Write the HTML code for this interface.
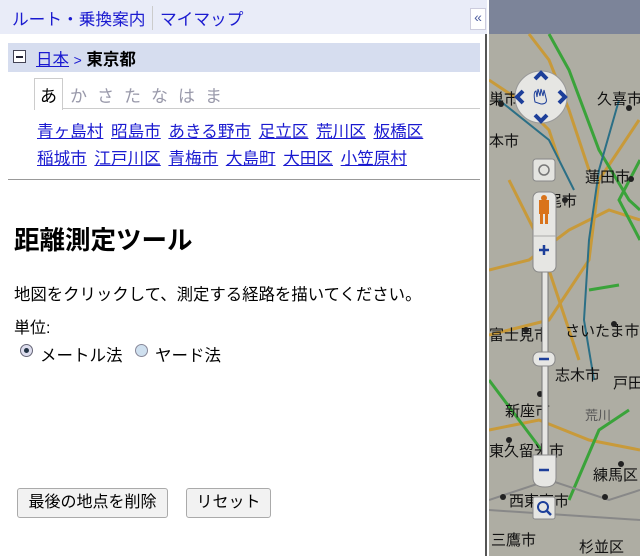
<!DOCTYPE html>
<html><head><meta charset="utf-8"><style>
*{margin:0;padding:0;box-sizing:border-box}
body{width:640px;height:556px;overflow:hidden;position:relative;background:#fff;font-family:"Liberation Sans","Noto Sans CJK JP",sans-serif;color:#000}
.a{position:absolute;white-space:nowrap}
a{color:#1a1ad0;text-decoration:underline}
#left{position:absolute;left:0;top:0;width:487px;height:556px;background:#fff;border-right:2px solid #555}
#top{position:absolute;left:0;top:0;width:487px;height:34px;background:#e9ecf8}
#map{position:absolute;left:489px;top:0;width:151px;height:556px;background:#aeada3;overflow:hidden}
</style></head><body>
<div id="map">
<svg width="151" height="556" style="position:absolute;left:0;top:0">
<rect width="151" height="34" fill="#7c8499"/>
<g fill="none" stroke-width="3">
<path d="M40 34 L60 60 L80 110 L100 170" stroke="#c89a3a"/>
<path d="M0 80 L30 100 L60 130 L70 160" stroke="#c89a3a"/>
<path d="M150 120 L110 180 L100 260 L60 320 L20 330 L0 335" stroke="#c89a3a"/>
<path d="M0 270 L40 260 L80 230 L120 210 L151 220" stroke="#c89a3a"/>
<path d="M20 180 L50 240 L70 300 L90 360" stroke="#c89a3a"/>
<path d="M0 430 L50 420 L100 440 L151 450" stroke="#c89a3a"/>
<path d="M60 34 L80 70 L110 150 L140 200 L151 210" stroke="#3aa33a"/>
<path d="M151 160 L130 200 L151 240" stroke="#3aa33a"/>
<path d="M0 380 L30 420 L60 460" stroke="#3aa33a"/>
<path d="M80 500 L110 430 L140 410" stroke="#3aa33a"/>
<path d="M100 290 L130 285" stroke="#3aa33a"/>
</g>
<g fill="none" stroke-width="2">
<path d="M10 100 L60 140 L85 190" stroke="#2b6f86"/>
<path d="M130 100 L110 170 L100 240 L95 320 L105 380" stroke="#2b6f86"/>
<path d="M0 500 L60 480 L120 500 L151 490" stroke="#888"/>
<path d="M0 510 L151 520" stroke="#888"/>
</g>
<g font-family="Liberation Sans,Noto Sans CJK JP,sans-serif" font-size="15" fill="#111">
<text x="0" y="104">巣市</text><text x="108" y="104">久喜市</text>
<text x="0" y="146">本市</text><text x="96" y="182">蓮田市</text>
<text x="58" y="206">尾市</text>
<text x="0" y="340">富士見市</text><text x="76" y="336">さいたま市</text>
<text x="66" y="380">志木市</text><text x="124" y="388">戸田</text>
<text x="16" y="416">新座市</text><text x="96" y="420" fill="#555" font-size="13">荒川</text>
<text x="0" y="456">東久留米市</text><text x="104" y="480">練馬区</text>
<text x="20" y="506">西東京市</text><text x="2" y="545">三鷹市</text><text x="90" y="552">杉並区</text>
</g>
<g fill="#222"><circle cx="12" cy="104" r="3"/><circle cx="140" cy="108" r="3"/><circle cx="142" cy="179" r="3"/><circle cx="76" cy="200" r="3"/><circle cx="37" cy="330" r="3"/><circle cx="125" cy="324" r="3"/><circle cx="51" cy="394" r="3"/><circle cx="20" cy="440" r="3"/><circle cx="132" cy="464" r="3"/><circle cx="14" cy="497" r="3"/><circle cx="116" cy="497" r="3"/></g>
<circle cx="52" cy="97" r="26" fill="#e6e6e3" stroke="#999"/>
<g fill="none" stroke="#1d3f9a" stroke-width="4">
<path d="M46 79 L52 73 L58 79"/><path d="M46 115 L52 121 L58 115"/><path d="M34 91 L28 97 L34 103"/><path d="M70 91 L76 97 L70 103"/></g>
<path d="M46 102 Q44 92 47 91 L48 97 L49 89 L51 96 L52 89 L54 96 L55 90 L57 98 Q59 104 52 104 Z" fill="none" stroke="#1d3f9a" stroke-width="1"/>
<rect x="44" y="159" width="22" height="22" rx="3" fill="#e4e4e0" stroke="#888"/>
<circle cx="55" cy="170" r="5" fill="none" stroke="#777" stroke-width="1.5"/>
<rect x="53" y="255" width="6" height="210" fill="#e6e6e3" stroke="#777"/>
<rect x="44" y="192" width="23" height="80" rx="6" fill="#e6e6e3" stroke="#888"/>
<line x1="44" y1="236" x2="67" y2="236" stroke="#aaa"/>
<rect x="50" y="200" width="10" height="14" fill="#d9731b"/><circle cx="55" cy="198" r="3" fill="#d9731b"/><rect x="51" y="214" width="3" height="10" fill="#d9731b"/><rect x="56" y="214" width="3" height="10" fill="#d9731b"/>
<path d="M50 250 H60 M55 245 V255" stroke="#1d3f9a" stroke-width="2.5"/>
<rect x="44" y="352" width="22" height="14" rx="6" fill="#e6e6e3" stroke="#888"/><path d="M50 359 H60" stroke="#1d3f9a" stroke-width="2.5"/>
<path d="M44 455 H67 V478 Q67 487 56 487 Q44 487 44 478 Z" fill="#e6e6e3" stroke="#888"/><path d="M50 470 H60" stroke="#1d3f9a" stroke-width="2.5"/>
<rect x="44" y="497" width="22" height="22" rx="2" fill="#e6e6e3" stroke="#888"/><circle cx="54" cy="507" r="5" fill="none" stroke="#1d3f9a" stroke-width="2"/><path d="M58 511 L62 515" stroke="#1d3f9a" stroke-width="2.5"/>
</svg>
</div>
<div id="left">
<div id="top"></div>
<div class="a" style="left:12px;top:6px;font-size:16.7px;color:#1a1ad0">ルート・乗換案内</div>
<div class="a" style="left:152px;top:6px;width:1px;height:24px;background:#ccc"></div>
<div class="a" style="left:160px;top:6px;font-size:16.7px;color:#1a1ad0">マイマップ</div>
<div class="a" style="left:470px;top:8px;width:16px;height:22px;background:#fff;border:1px solid #ccd;font-size:14px;color:#5060a0;text-align:center">«</div>
<div class="a" style="left:8px;top:43px;width:472px;height:29px;background:#d6ddef"></div>
<div class="a" style="left:13px;top:50px;width:13px;height:13px;border:1px solid #445;background:#fff"><div style="position:absolute;left:2px;top:5px;width:7px;height:1.5px;background:#223"></div></div>
<div class="a" style="left:36px;top:46px;font-size:16.5px"><a href="#">日本</a> <span style="color:#1a1ad0;font-size:14px">&gt;</span> <b>東京都</b></div>
<div class="a" style="left:62px;top:108px;width:418px;height:1px;background:#ccc"></div>
<div class="a" style="left:34px;top:78px;width:29px;height:32px;border:1px solid #ccc;border-bottom:none;background:#fff"></div>
<div class="a" style="left:40px;top:82px;font-size:17px">あ</div>
<div class="a" style="left:70px;top:82px;font-size:17px;color:#99a;letter-spacing:10px">かさたなはま</div>
<div class="a" style="left:37px;top:118px;font-size:16.6px;word-spacing:3px"><a href="#">青ヶ島村</a> <a href="#">昭島市</a> <a href="#">あきる野市</a> <a href="#">足立区</a> <a href="#">荒川区</a> <a href="#">板橋区</a></div>
<div class="a" style="left:37px;top:145px;font-size:16.6px;word-spacing:3px"><a href="#">稲城市</a> <a href="#">江戸川区</a> <a href="#">青梅市</a> <a href="#">大島町</a> <a href="#">大田区</a> <a href="#">小笠原村</a></div>
<div class="a" style="left:8px;top:179px;width:472px;height:1px;background:#999"></div>
<div class="a" style="left:14px;top:220px;font-size:25.5px;font-weight:bold">距離測定ツール</div>
<div class="a" style="left:14px;top:281px;font-size:16.4px">地図をクリックして、測定する経路を描いてください。</div>
<div class="a" style="left:14px;top:314px;font-size:16px">単位:</div>
<div class="a" style="left:20px;top:344px;width:13px;height:13px;border-radius:50%;border:1px solid #667;background:#dde"><div style="position:absolute;left:3px;top:3px;width:5px;height:5px;border-radius:50%;background:#234"></div></div>
<div class="a" style="left:40px;top:342px;font-size:16.5px">メートル法</div>
<div class="a" style="left:135px;top:344px;width:13px;height:13px;border-radius:50%;border:1px solid #889;background:#cfe0ef"></div>
<div class="a" style="left:155px;top:342px;font-size:16.5px">ヤード法</div>
<div class="a" style="left:17px;top:488px;width:151px;height:30px;border:1px solid #aaa;border-radius:3px;background:#f2f2f2;font-size:16px;text-align:center;line-height:28px">最後の地点を削除</div>
<div class="a" style="left:186px;top:488px;width:85px;height:30px;border:1px solid #aaa;border-radius:3px;background:#f2f2f2;font-size:16px;text-align:center;line-height:28px">リセット</div>
</div>
</body></html>
